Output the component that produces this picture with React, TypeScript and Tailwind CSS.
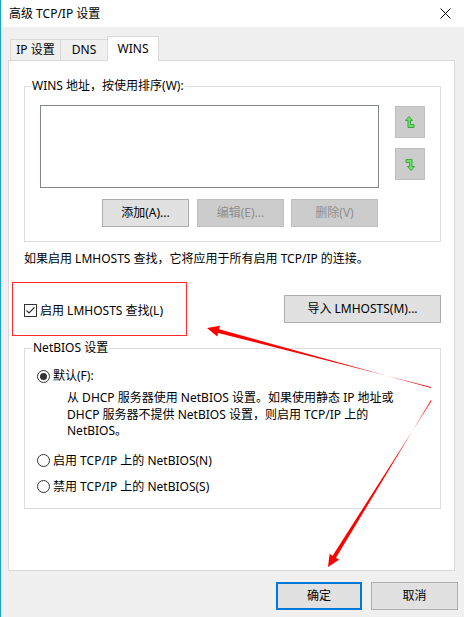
import React from "react";

function UpArrow() {
  return (
    <svg width="10" height="13" viewBox="0 0 10 13">
      <path d="M4 0.5 L7.5 4.5 L5.5 4.5 L5.5 8.5 L9 8.5 L9 11.5 L3 11.5 L3 4.5 L0.5 4.5 Z" fill="#6fe06f" stroke="#3aa83a" strokeWidth="1" />
    </svg>
  );
}

function DownArrow() {
  return (
    <svg width="10" height="13" viewBox="0 0 10 13">
      <path d="M6 12.5 L2.5 8.5 L4.5 8.5 L4.5 4.5 L1 4.5 L1 1.5 L7 1.5 L7 8.5 L9.5 8.5 Z" fill="#6fe06f" stroke="#3aa83a" strokeWidth="1" />
    </svg>
  );
}

function Radio({ checked }: { checked?: boolean }) {
  return (
    <span className="w-[13px] h-[13px] rounded-full border border-[#333333] bg-white flex items-center justify-center shrink-0">
      {checked && <span className="w-[7px] h-[7px] rounded-full bg-[#333333]" />}
    </span>
  );
}

function Btn({ children, disabled, className = "" }: { children: React.ReactNode; disabled?: boolean; className?: string }) {
  return (
    <div
      className={
        "h-[28px] flex items-center justify-center border " +
        (disabled ? "bg-[#cccccc] border-[#bfbfbf] text-[#8f8f8f] " : "bg-[#e1e1e1] border-[#adadad] text-black ") +
        className
      }
    >
      {children}
    </div>
  );
}

export default function App() {
  return (
    <div className="relative w-[464px] h-[617px] overflow-hidden bg-[#f0f0f0] border-l border-[#1aa3c8] text-[12px] leading-[16px] text-black font-['Noto_Sans','Noto_Sans_CJK_SC',sans-serif]">
      {/* title bar */}
      <div className="h-[27px] bg-white flex items-center pl-[8px] pr-[13px]">
        <span>高级 TCP/IP 设置</span>
        <svg className="ml-auto" width="11" height="11" viewBox="0 0 11 11">
          <path d="M0.5 0.5 L10.5 10.5 M10.5 0.5 L0.5 10.5" stroke="#000" strokeWidth="1" />
        </svg>
      </div>

      <div className="pl-[7px] pt-[9px]">
        {/* tabs */}
        <div className="flex items-end h-[24px] pl-[2px]">
          <div className="w-[51px] h-[21px] border border-b-0 border-[#d9d9d9] bg-[#f0f0f0] flex items-center justify-center">IP 设置</div>
          <div className="-ml-px w-[48px] h-[21px] border border-b-0 border-[#d9d9d9] bg-[#f0f0f0] flex items-center justify-center">DNS</div>
          <div className="relative z-10 -ml-px -mb-px w-[52px] h-[25px] border border-b-0 border-[#d9d9d9] bg-white flex items-center justify-center">WINS</div>
        </div>

        {/* panel */}
        <div className="w-[447px] h-[511px] bg-white border border-[#d9d9d9] flex flex-col">
          {/* WINS group */}
          <div className="relative ml-[15px] mt-[25px] w-[417px] h-[156px] border border-[#dcdcdc]">
            <span className="absolute left-[6px] -top-[9px] bg-white px-px">WINS 地址，按使用排序(W):</span>
            <div className="flex mt-[18px] ml-[15px]">
              <div className="w-[339px] h-[83px] border border-[#82878f] bg-white" />
              <div className="ml-[16px] mt-px flex flex-col gap-[10px]">
                <div className="w-[30px] h-[32px] bg-[#cccccc] border border-[#bfbfbf] flex items-center justify-center">
                  <UpArrow />
                </div>
                <div className="w-[30px] h-[32px] bg-[#cccccc] border border-[#bfbfbf] flex items-center justify-center">
                  <DownArrow />
                </div>
              </div>
            </div>
            <div className="flex ml-[77px] mt-[11px]">
              <Btn className="w-[87px]">添加(A)...</Btn>
              <Btn disabled className="ml-[8px] w-[87px]">编辑(E)...</Btn>
              <Btn disabled className="ml-[7px] w-[87px]">删除(V)</Btn>
            </div>
          </div>

          <div className="ml-[15px] mt-[9px] whitespace-nowrap">如果启用 LMHOSTS 查找，它将应用于所有启用 TCP/IP 的连接。</div>

          <div className="flex items-center mt-[15px]">
            <div className="ml-[3px] w-[175px] h-[54px] border border-[#ff2a2a] flex items-center pl-[11px] pt-[3px]">
              <span className="w-[13px] h-[13px] border border-[#333333] bg-white flex items-center justify-center shrink-0">
                <svg width="11" height="11" viewBox="0 0 11 11">
                  <path d="M1.5 5.5 L4 8 L9.5 2.5" stroke="#333" strokeWidth="1.2" fill="none" />
                </svg>
              </span>
              <span className="ml-[3px] whitespace-nowrap">启用 LMHOSTS 查找(L)</span>
            </div>
            <Btn className="ml-auto mr-[13px] w-[157px]">导入 LMHOSTS(M)...</Btn>
          </div>

          {/* NetBIOS group */}
          <div className="relative ml-[15px] mt-[12px] w-[417px] h-[161px] border border-[#dcdcdc]">
            <span className="absolute left-[7px] -top-[9px] bg-white px-px">NetBIOS 设置</span>
            <div className="flex items-center mt-[19px] ml-[12px]">
              <Radio checked />
              <span className="ml-[3px]">默认(F):</span>
            </div>
            <div className="ml-[42px] mt-[6px] leading-[16.5px] whitespace-nowrap">
              从 DHCP 服务器使用 NetBIOS 设置。如果使用静态 IP 地址或
              <br />
              DHCP 服务器不提供 NetBIOS 设置，则启用 TCP/IP 上的
              <br />
              NetBIOS。
            </div>
            <div className="flex items-center mt-[13px] ml-[12px]">
              <Radio />
              <span className="ml-[3px]">启用 TCP/IP 上的 NetBIOS(N)</span>
            </div>
            <div className="flex items-center mt-[10px] ml-[12px]">
              <Radio />
              <span className="ml-[3px]">禁用 TCP/IP 上的 NetBIOS(S)</span>
            </div>
          </div>
        </div>

        {/* dialog buttons */}
        <div className="flex gap-[9px] pl-[268px] mt-[11px]">
          <div className="w-[86px] h-[28px] border-2 border-[#0078d7] bg-[#e1e1e1] flex items-center justify-center">确定</div>
          <Btn className="w-[87px]">取消</Btn>
        </div>
      </div>

      {/* red annotation arrows */}
      <svg className="absolute left-0 top-0 pointer-events-none" width="464" height="617" viewBox="0 0 464 617">
        <polygon points="430,387 430,388 218.1,329.2 219,325.8 206,328 216.2,336.4 217.1,333" fill="#ff0000" />
        <polygon points="430,400 430.5,401 331.6,555.75 328.6,553.9 327,567 338,559.7 335,557.85" fill="#ff0000" />
      </svg>
    </div>
  );
}
